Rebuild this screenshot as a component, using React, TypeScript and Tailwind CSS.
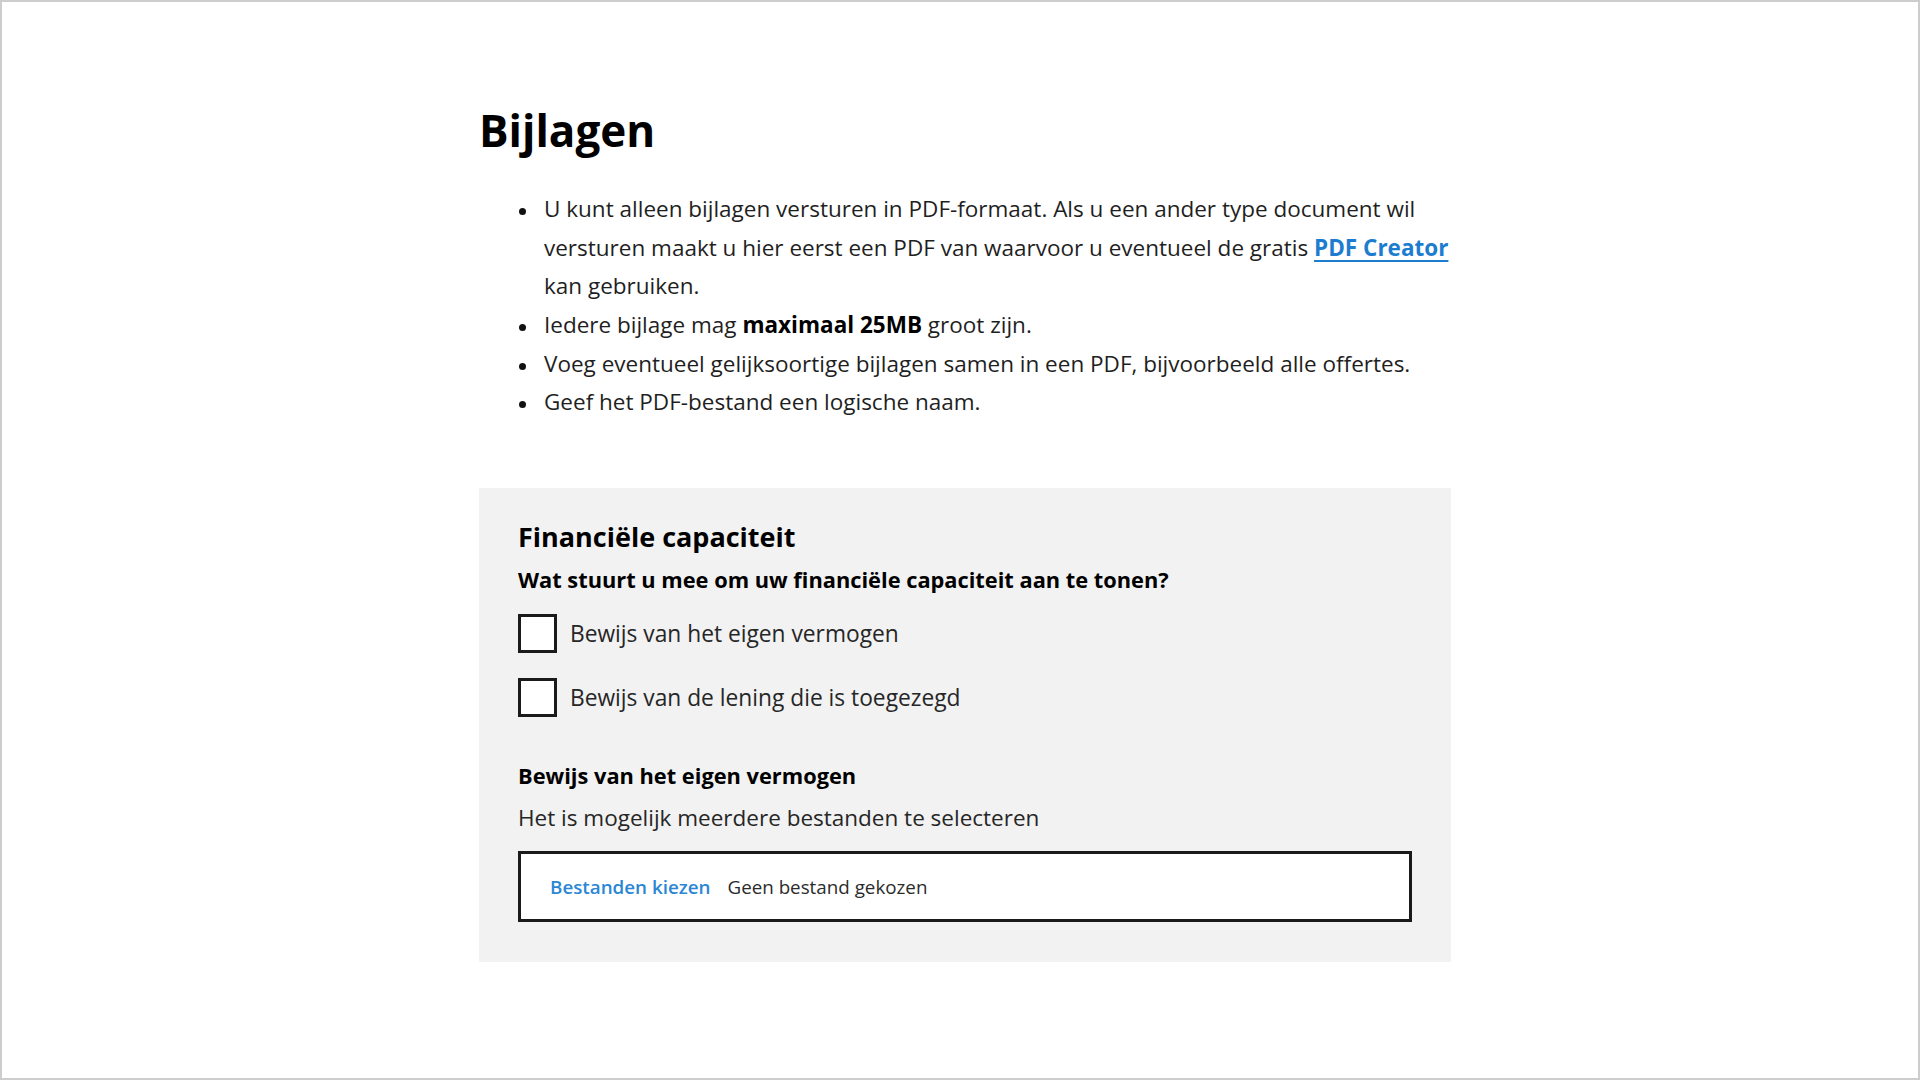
import React from "react";

const bullets: React.ReactNode[] = [
  <>
    U kunt alleen bijlagen versturen in PDF-formaat. Als u een ander type document wil versturen maakt u hier eerst
    een PDF van waarvoor u eventueel de gratis{" "}
    <a href="#" className="font-bold text-[#1c7dd0] underline decoration-2 underline-offset-[4px]">
      PDF Creator
    </a>{" "}
    kan gebruiken.
  </>,
  <>
    Iedere bijlage mag <strong className="font-bold text-black">maximaal 25MB</strong> groot zijn.
  </>,
  <>Voeg eventueel gelijksoortige bijlagen samen in een PDF, bijvoorbeeld alle offertes.</>,
  <>Geef het PDF-bestand een logische naam.</>,
];

const options = ["Bewijs van het eigen vermogen", "Bewijs van de lening die is toegezegd"];

const Checkbox = ({ label }: { label: string }) => (
  <label className="flex items-center gap-[13px] cursor-pointer">
    <span className="w-[39px] h-[39px] shrink-0 border-[3px] border-[#1a1a1a] bg-white" />
    <span className="text-[22.75px] leading-[39px] text-[#262626]">{label}</span>
  </label>
);

const App = () => {
  return (
    <div className="h-screen border-2 border-[#cdcdcd] bg-white font-['Open_Sans',sans-serif] text-[#1f1f1f]">
      <div className="ml-[477px] w-[972px] pt-[102px]">
        <h1 className="text-[44px] leading-[52.8px] font-bold text-black">Bijlagen</h1>

        <ul className="mt-[33px] pl-[40px] text-[22.5px] leading-[38.7px]">
          {bullets.map((b, i) => (
            <li key={i} className="flex">
              <span className="w-[7px] h-[7px] mt-[18px] mr-[18px] shrink-0 rounded-full bg-[#111]" />
              <span>{b}</span>
            </li>
          ))}
        </ul>

        <section className="mt-[66px] bg-[#f2f2f2] px-[39px] pt-[33px] pb-[40px]">
          <h3 className="text-[27px] leading-[32.4px] font-bold text-black">Financiële capaciteit</h3>
          <p className="mt-[11px] text-[21.8px] leading-[32px] font-bold text-black">
            Wat stuurt u mee om uw financiële capaciteit aan te tonen?
          </p>

          <div className="mt-[18px] flex flex-col gap-[25px]">
            {options.map((o) => (
              <Checkbox key={o} label={o} />
            ))}
          </div>

          <p className="mt-[43px] text-[21.8px] leading-[32px] font-bold text-black">Bewijs van het eigen vermogen</p>
          <p className="mt-[10px] text-[22.5px] leading-[32px] text-[#262626]">
            Het is mogelijk meerdere bestanden te selecteren
          </p>

          <div className="mt-[17px] h-[71px] border-[3px] border-[#1a1a1a] bg-white flex items-center pl-[29px] gap-[17px] text-[18.8px]">
            <span className="font-semibold text-[#2b87d3]">Bestanden kiezen</span>
            <span className="text-[#2b2b2b]">Geen bestand gekozen</span>
          </div>
        </section>
      </div>
    </div>
  );
};

export default App;
